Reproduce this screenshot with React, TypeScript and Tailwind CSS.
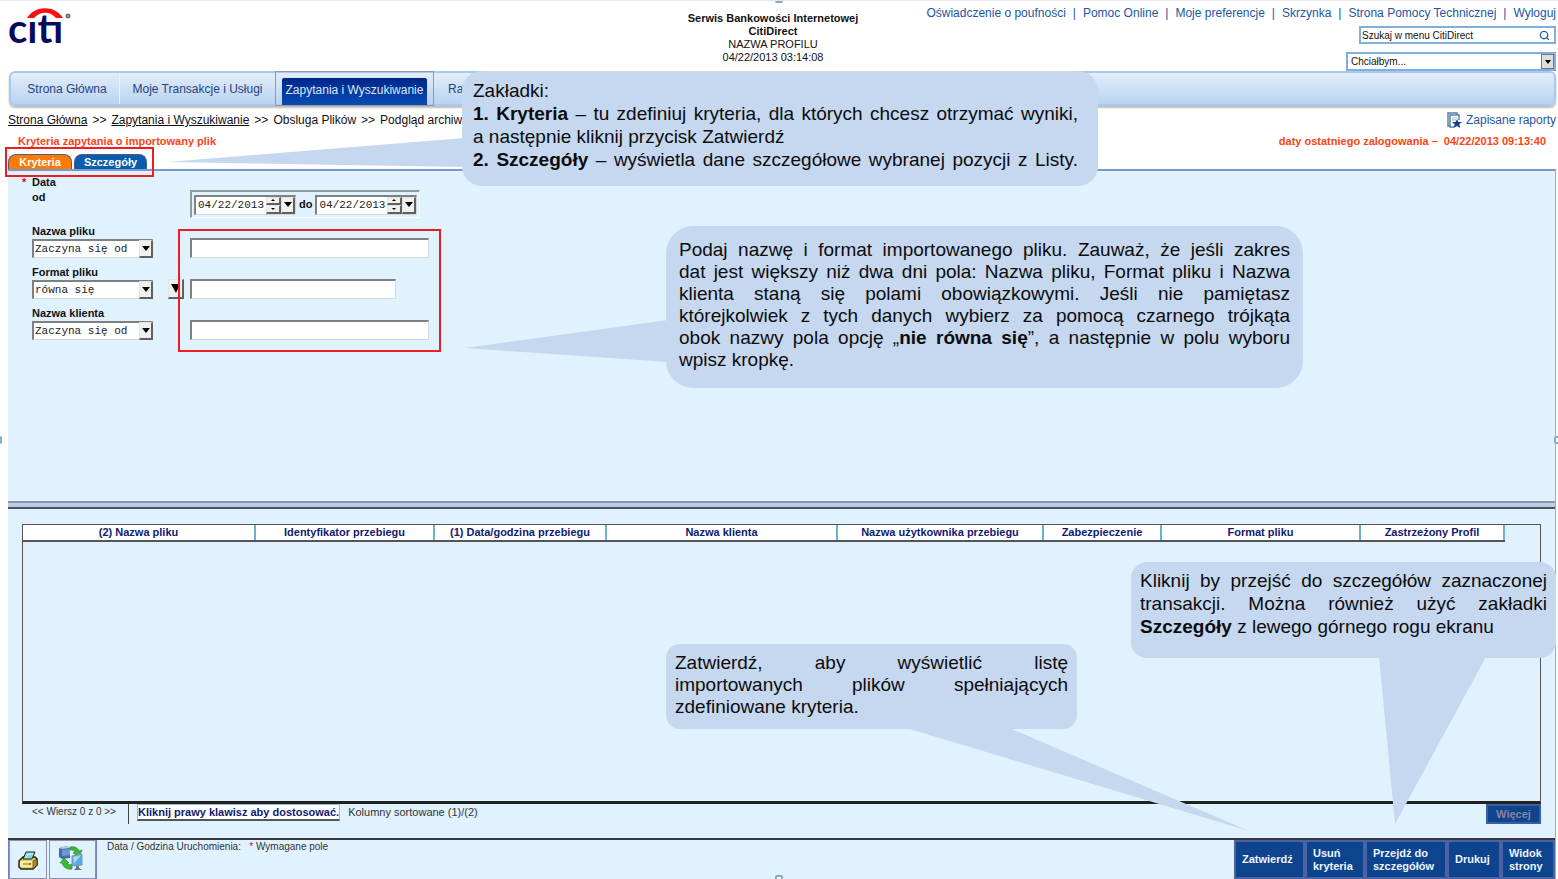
import { useState } from 'react';
import type { ReactNode } from 'react';
import { Search } from 'lucide-react';

const topLinks = [
  'Oświadczenie o poufności',
  'Pomoc Online',
  'Moje preferencje',
  'Skrzynka',
  'Strona Pomocy Technicznej',
  'Wyloguj',
];

const columns = [
  { label: '(2) Nazwa pliku', width: 'w-[232px]' },
  { label: 'Identyfikator przebiegu', width: 'w-[179px]' },
  { label: '(1) Data/godzina przebiegu', width: 'w-[172px]' },
  { label: 'Nazwa klienta', width: 'w-[231px]' },
  { label: 'Nazwa użytkownika przebiegu', width: 'w-[206px]' },
  { label: 'Zabezpieczenie', width: 'w-[118px]' },
  { label: 'Format pliku', width: 'w-[199px]' },
  { label: 'Zastrzeżony Profil', width: 'w-[144px]' },
];

const actions = [
  { label: 'Zatwierdź', width: 'w-[71px]' },
  { label: 'Usuń kryteria', width: 'w-[60px]' },
  { label: 'Przejdź do szczegółów', width: 'w-[82px]' },
  { label: 'Drukuj', width: 'w-[54px]' },
  { label: 'Widok strony', width: 'w-[54px]' },
];

const sunken = 'bg-white border-t-2 border-l-2 border-[#808080] border-r border-b border-r-[#d8d8d8] border-b-[#d8d8d8]';
const raised = 'bg-[#f0f0ee] border border-[#e4e4e4] border-r-2 border-b-2 border-r-[#606060] border-b-[#606060]';

function Logo() {
  return (
    <svg width="66" height="60" viewBox="0 0 66 60" role="img" aria-label="citi">
      <text x="0" y="42" fontFamily="Lato, sans-serif" fontWeight="700" fontSize="40" fill="#0a0a5c">
        cıtı
      </text>
      <path d="M19 17 C27 4 47 4 55 17 L48 17 C42 10 32 10 26 17 Z" fill="#fb0f12" />
      <circle cx="60" cy="15" r="2" fill="#8d97bd" stroke="#3a4a86" />
    </svg>
  );
}

function Arrow() {
  return (
    <svg width="8" height="5" viewBox="0 0 8 5" aria-hidden="true">
      <path d="M0 0h8L4 5z" fill="#000" />
    </svg>
  );
}

function OperatorSelect({ id, label, value }: { id: string; label: string; value: string }) {
  return (
    <div className="w-[158px]">
      <label htmlFor={id} className="block leading-[15px] whitespace-nowrap">{label}</label>
      <div className="relative w-[121px]">
        <select
          id={id}
          defaultValue={value}
          className={`${sunken} block h-[19px] w-full appearance-none pl-px font-['Liberation_Mono',monospace] text-[11px] leading-[15px] font-normal text-[#222]`}
        >
          <option>Zaczyna się od</option>
          <option>równa się</option>
          <option>nie równa się</option>
        </select>
        <span className={`${raised} pointer-events-none absolute top-px right-0 flex h-[18px] w-[14px] items-center justify-center`}>
          <Arrow />
        </span>
      </div>
    </div>
  );
}

function DateField({ label }: { label: string }) {
  return (
    <div className={`${sunken} flex h-5 items-stretch`}>
      <input
        type="text"
        aria-label={label}
        defaultValue="04/22/2013"
        className="w-[70px] pl-0.5 font-['Liberation_Mono',monospace] text-[11px] font-normal text-[#222]"
      />
      <span className="flex w-[15px] flex-col">
        <button aria-label="Następny dzień" className={`${raised} flex flex-1 items-center justify-center`}>
          <svg width="4" height="2"><path d="M0 2L2 0L4 2z" /></svg>
        </button>
        <button aria-label="Poprzedni dzień" className={`${raised} flex flex-1 items-center justify-center`}>
          <svg width="4" height="2"><path d="M0 0h4L2 2z" /></svg>
        </button>
      </span>
      <button aria-label="Kalendarz" className={`${raised} flex w-[14px] items-center justify-center`}>
        <Arrow />
      </button>
    </div>
  );
}

function Callout({ className, children }: { className: string; children: ReactNode }) {
  return (
    <div className={`absolute bg-[#c6d8f0] text-[19px] whitespace-nowrap text-[#0c0c0c] ${className}`}>
      {children}
    </div>
  );
}

// A full line of a justified paragraph
function Line({ children }: { children: ReactNode }) {
  return <p className="text-justify [text-align-last:justify]">{children}</p>;
}

function Handle({ className }: { className: string }) {
  return <span className={`absolute size-2 rounded-xs border-2 border-[#8aa9c4] bg-white ${className}`} />;
}

function ReportIcon() {
  return (
    <svg width="15" height="17" viewBox="0 0 15 17" aria-hidden="true">
      <path d="M3 14H1V1h9v2" fill="none" stroke="#5d7fa3" strokeWidth="1.5" />
      <path d="M7 15H3V3h9v5" fill="none" stroke="#5d7fa3" strokeWidth="1.5" />
      <path d="M5 6h5M5 8h4" stroke="#9fb6cc" />
      <path d="M10 7l1.4 3H15l-2.7 2.3 1 3.7-3.3-2-3.3 2 1-3.7L5 10h3.6z" fill="#143f92" />
    </svg>
  );
}

function PrinterIcon() {
  return (
    <svg width="20" height="20" viewBox="0 0 20 20" aria-hidden="true">
      <path d="M1 11L5 7h12l2 2v6l-4 4H3l-2-2z" fill="#e9cf52" stroke="#222" strokeWidth="1.5" />
      <path d="M2 11h13v6H3l-1-1z" fill="#f8ec9c" />
      <path d="M15 11l4-2v6l-4 4z" fill="#b78f21" stroke="#222" strokeWidth=".6" />
      <path d="M5 9L8 2h9l-3 7z" fill="#7ed9dd" stroke="#222" />
      <path d="M8 8l2-4h5" stroke="#d7ffff" fill="none" />
      <path d="M5 14h6" stroke="#8e7420" />
      <circle cx="12" cy="14" r="1" fill="#c22" />
    </svg>
  );
}

function SyncIcon() {
  return (
    <svg width="26" height="26" viewBox="0 0 26 26" aria-hidden="true">
      <path d="M12 2c5-1 8 1 9 4l3-1-3 7-6-4 2-1c-1-2-3-2-5-2z" fill="#3aba36" stroke="#17872a" strokeWidth=".6" />
      <path d="M14 24c-5 1-9-2-10-6H2l4-5 5 5H9c1 2 3 2 5 1z" fill="#3aba36" stroke="#17872a" strokeWidth=".6" />
      <path d="M1 3l8-2 3 2v10l-8 1-3-2z" fill="#426da9" />
      <path d="M1 3l8-2 3 2-8 1z" fill="#b9cbe3" />
      <path d="M4 5l8-1v6l-8 1z" fill="#6c97d1" />
      <path d="M14 11l10-2v11l-10 1z" fill="#5ba9ed" stroke="#7d93aa" />
      <path d="M15 12l8-2-7 9z" fill="#a6d8fb" />
      <path d="M18 21h3v2l3 2h-8l2-2z" fill="#68727c" />
    </svg>
  );
}

export default function App() {
  const [tab, setTab] = useState('Kryteria');

  return (
    <div className="relative flex min-h-screen flex-col overflow-hidden border-t border-gray-200 bg-white pr-0.5 pl-2 font-['Liberation_Sans',Arial,sans-serif] text-[11px] text-[#111]">
      {/* Header */}
      <header className="grid h-[70px] grid-cols-[1fr_auto_1fr]">
        <div><Logo /></div>
        <div className="pt-[11px] pr-[18px] text-center leading-[13px]">
          <p className="font-bold">Serwis Bankowości Internetowej</p>
          <p className="font-bold">CitiDirect</p>
          <p>NAZWA PROFILU</p>
          <p>04/22/2013 03:14:08</p>
        </div>
        <div className="flex flex-col items-end pt-1">
          <nav className="flex text-xs leading-[17px] whitespace-nowrap text-[#2255a4]">
            {topLinks.map((link, i) => (
              <span key={link}>
                {i > 0 && <span className="px-[7px]">|</span>}
                <a href="#">{link}</a>
              </span>
            ))}
          </nav>
          <div className="mt-1 flex h-[18px] w-[197px] items-center border-2 border-[#82aede] pr-1">
            <input
              type="text"
              aria-label="Szukaj"
              defaultValue="Szukaj w menu CitiDirect"
              className="min-w-0 flex-1 pl-px text-[10px]"
            />
            <button aria-label="Szukaj w menu"><Search className="size-[11px] text-[#2f62a4]" strokeWidth={3} /></button>
          </div>
          <div className="relative mt-2 w-[210px]">
            <select aria-label="Chciałbym" className="block h-[19px] w-full appearance-none border-2 border-[#82aede] bg-white pl-[3px] text-[10px]">
              <option>Chciałbym...</option>
            </select>
            <span className="pointer-events-none absolute top-0.5 right-0.5 flex h-[15px] w-[13px] items-center justify-center border border-[#777] bg-[#dedede]">
              <svg width="6" height="4"><path d="M0 0h6L3 4z" /></svg>
            </span>
          </div>
        </div>
      </header>

      {/* Main menu */}
      <nav className="ml-px flex h-[35px] rounded-md border-2 border-[#a9caef] bg-linear-to-b from-[#e3edf9] to-[#b9d3f2] text-xs text-[#26427e] shadow-[0_2px_2px_#bbb]">
        <a href="#" className="flex w-[109px] items-center justify-center border-r border-[#e9f2fd] pl-1">Strona Główna</a>
        <a href="#" className="flex w-[155px] items-center justify-center">Moje Transakcje i Usługi</a>
        <a href="#" className="-my-0.5 flex w-[159px] items-end justify-center border border-[#999] px-1.5 pt-1.5">
          <span className="flex h-full w-full items-center justify-center rounded-t-xs bg-linear-to-b from-[#00268a] to-[#0a4bb5] pb-1 whitespace-nowrap text-[#dce8fb]">
            Zapytania i Wyszukiwanie
          </span>
        </a>
        <a href="#" className="flex items-center pl-3.5">Ra</a>
      </nav>

      {/* Breadcrumb */}
      <div className="flex h-[28px] items-center justify-between text-xs">
        <div className="flex gap-[5px] whitespace-nowrap">
          <a href="#" className="underline">Strona Główna</a>
          <span>&gt;&gt;</span>
          <a href="#" className="underline">Zapytania i Wyszukiwanie</a>
          <span>&gt;&gt;</span>
          <span>Obsluga Plików</span>
          <span>&gt;&gt;</span>
          <span>Podgląd archiw</span>
        </div>
        <a href="#" className="flex items-center gap-1 text-[#2255a4]"><ReportIcon />Zapisane raporty</a>
      </div>
      <div className="flex h-5 justify-between px-2.5 leading-[14px] font-bold text-[#ff4312]">
        <h1>Kryteria zapytania o importowany plik</h1>
        <p>daty ostatniego zalogowania – &nbsp;04/22/2013 09:13:40</p>
      </div>

      {/* Tabs */}
      <div className="flex h-[15px] gap-0.5 font-bold text-white">
        {['Kryteria', 'Szczegóły'].map((name) => (
          <button
            key={name}
            onClick={() => setTab(name)}
            className={`rounded-t-lg border border-b-0 border-[#4b5f86] leading-[14px] ${
              name === 'Kryteria' ? 'w-[64px]' : 'w-[73px]'
            } ${tab === name ? 'bg-[#ff7a05]' : 'bg-[#0a5cae]'}`}
          >
            {name}
          </button>
        ))}
      </div>

      {/* Criteria */}
      <main className="flex flex-1 flex-col border-t-2 border-r border-t-[#7898cf] border-r-[#8fb0d8] bg-[#e1f2ff]">
        <form className="flex min-h-[330px] flex-col pt-1 pl-6 font-bold" onSubmit={(e) => e.preventDefault()}>
          <div className="flex h-[49px]">
            <div className="relative w-[158px] leading-[15px]">
              <span className="absolute -left-2.5 text-red-600">*</span>
              <p>Data</p>
              <p>od</p>
            </div>
            <div className="mt-[15px] flex h-7 items-center gap-[3px] border-t-2 border-l-2 border-r border-b border-[#8b9da0] border-r-white border-b-white px-0.5">
              <DateField label="Data od" />
              do
              <DateField label="Data do" />
            </div>
          </div>
          <div className="flex flex-col gap-[7px]">
            <div className="flex items-end">
              <OperatorSelect id="file-name" label="Nazwa pliku" value="Zaczyna się od" />
              <input type="text" aria-label="Nazwa pliku" className={`${sunken} h-5 w-[239px]`} />
            </div>
            <div className="flex items-end">
              <OperatorSelect id="file-format" label="Format pliku" value="równa się" />
              <button aria-label="Wybierz format" className={`${raised} -ml-[22px] mr-1.5 flex h-5 w-4 items-center justify-center`}>
                <svg width="9" height="9"><path d="M0 0h9L5 9z" /></svg>
              </button>
              <input type="text" aria-label="Format pliku" className={`${sunken} h-5 w-[206px]`} />
            </div>
            <div className="flex items-end">
              <OperatorSelect id="client-name" label="Nazwa klienta" value="Zaczyna się od" />
              <input type="text" aria-label="Nazwa klienta" className={`${sunken} h-5 w-[239px]`} />
            </div>
          </div>
        </form>

        <div className="h-2 border-t-2 border-b-2 border-[#8d98a5] border-b-[#4d545c] bg-[#b9cde8]" />

        {/* Results */}
        <section className="mx-3.5 mt-[15px] flex-1 border border-b-3 border-[#555] border-b-[#222]">
          <table className="w-full table-fixed border-collapse leading-[15px] font-bold text-[#101a70]">
            <thead>
              <tr>
                {columns.map((col) => (
                  <th key={col.label} className={`${col.width} border-r-2 border-b-2 border-r-[#6cb0d0] border-b-[#555] bg-white whitespace-nowrap`}>
                    {col.label}
                  </th>
                ))}
                <th />
              </tr>
            </thead>
            <tbody />
          </table>
        </section>
        <div className="mx-3.5 flex h-[34px] items-start">
          <span className="w-[106px] pl-2.5 text-[10px] leading-[15px] text-[#333]">&lt;&lt; Wiersz 0 z 0 &gt;&gt;</span>
          <span className="h-5 w-px bg-[#444]" />
          <button className="ml-2 h-[17px] border border-b-2 border-[#8fc0dc] border-b-[#555] bg-white leading-[15px] font-bold whitespace-nowrap text-[#101a70]">
            Kliknij prawy klawisz aby dostosować.
          </button>
          <span className="ml-2 leading-[17px] text-[#333]">Kolumny sortowane (1)/(2)</span>
          <button disabled className="ml-auto h-5 w-[55px] border-2 border-[#3a5ea2] bg-[#0d448d] font-bold text-[#8b82a0]">
            Więcej
          </button>
        </div>

        {/* Bottom toolbar */}
        <footer className="flex h-[41px] border-t-2 border-[#3a3a3a]">
          <div className="flex gap-0.5 border-x border-[#7480c4]">
            <button aria-label="Drukuj stronę" className="flex w-[38px] items-center justify-center border border-[#8f8fb6]"><PrinterIcon /></button>
            <button aria-label="Odśwież" className="flex w-[47px] items-start justify-center border border-[#8f8fb6] pt-1 pr-1"><SyncIcon /></button>
          </div>
          <p className="flex-1 pl-2.5 text-[10px] leading-[14px] text-[#333]">
            Data / Godzina Uruchomienia: &nbsp; <span className="text-red-600">*</span> Wymagane pole
          </p>
          {actions.map((action) => (
            <button
              key={action.label}
              className={`${action.width} border-2 border-[#4a63a4] bg-[#0d448d] px-1.5 text-left leading-[13px] font-bold text-[#eef4ff]`}
            >
              {action.label}
            </button>
          ))}
        </footer>
      </main>

      {/* Annotations */}
      <div className="pointer-events-none absolute top-[146px] left-[5px] h-[30px] w-[149px] border-2 border-[#ee1c25]" />
      <div className="pointer-events-none absolute top-[228px] left-[178px] h-[123px] w-[263px] border-2 border-[#ee1c25]" />

      <svg className="pointer-events-none absolute top-0 left-0" width="1558" height="879" fill="#c6d8f0" aria-hidden="true">
        <path d="M168 161L464 137V166z" />
        <path d="M464 347L668 319V361z" />
        <path d="M903 726H1007L1249 830z" />
        <path d="M1379 656H1486L1395 823z" />
      </svg>

      <Callout className="top-[70px] left-[462px] w-[636px] rounded-[20px] pt-2 pr-5 pb-[15px] pl-[11px] leading-[23px]">
        <p>Zakładki:</p>
        <Line><b>1. Kryteria</b> – tu zdefiniuj kryteria, dla których chcesz otrzymać wyniki,</Line>
        <p>a następnie kliknij przycisk Zatwierdź</p>
        <Line><b>2. Szczegóły</b> – wyświetla dane szczegółowe wybranej pozycji z Listy.</Line>
      </Callout>
      <Callout className="top-[225px] left-[666px] w-[637px] rounded-[27px] px-[13px] pt-[13px] pb-[17px] leading-[22px]">
        <Line>Podaj nazwę i format importowanego pliku. Zauważ, że jeśli zakres</Line>
        <Line>dat jest większy niż dwa dni pola: Nazwa pliku, Format pliku i Nazwa</Line>
        <Line>klienta staną się polami obowiązkowymi. Jeśli nie pamiętasz</Line>
        <Line>którejkolwiek z tych danych wybierz za pomocą czarnego trójkąta</Line>
        <Line>obok nazwy pola opcję „<b>nie równa się</b>”, a następnie w polu wyboru</Line>
        <p>wpisz kropkę.</p>
      </Callout>
      <Callout className="top-[643px] left-[666px] w-[411px] rounded-[14px] px-[9px] pt-2 pb-[11px] leading-[22px]">
        <Line>Zatwierdź, aby wyświetlić listę</Line>
        <Line>importowanych plików spełniających</Line>
        <p>zdefiniowane kryteria.</p>
      </Callout>
      <Callout className="top-[561px] left-[1131px] w-[425px] rounded-2xl px-[9px] pt-[7px] pb-5 leading-[23px]">
        <Line>Kliknij by przejść do szczegółów zaznaczonej</Line>
        <Line>transakcji. Można również użyć zakładki</Line>
        <p><b>Szczegóły</b> z lewego górnego rogu ekranu</p>
      </Callout>

      <Handle className="-top-1.5 left-1/2 -translate-x-1/2" />
      <Handle className="-bottom-1 left-1/2 -translate-x-1/2" />
      <Handle className="top-1/2 -left-1.5 -translate-y-1/2" />
      <Handle className="top-1/2 -right-1 -translate-y-1/2" />
    </div>
  );
}
